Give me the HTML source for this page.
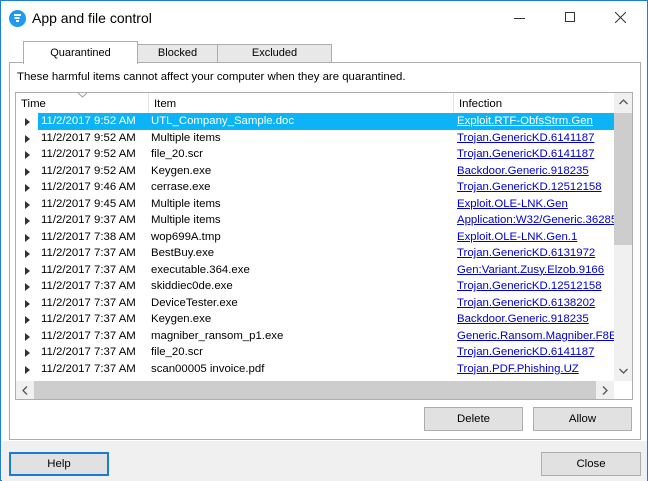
<!DOCTYPE html>
<html><head><style>
*{margin:0;padding:0;box-sizing:border-box}
body{width:648px;height:481px;overflow:hidden;font-family:"Liberation Sans",sans-serif;font-size:11.4px;color:#000;background:#fff;position:relative}
.win{position:absolute;left:0;top:0;width:648px;height:481px;border:1px solid #1c7ed6;background:#fff}
.abs{position:absolute}
.title{left:31px;top:9px;font-size:14px}
.tab{position:absolute;top:43px;height:19px;border:1px solid #adadad;background:#e8e8e8;font-size:11px;text-align:center;line-height:17px}
.panel{left:8px;top:61px;width:632px;height:378px;border:1px solid #adadad;background:#fff}
.list{left:14px;top:91px;width:618px;height:308px;border:1px solid #adadad;background:#fff;overflow:hidden}
.hdr{position:absolute;top:0;height:20px;line-height:22px;font-size:11.4px;padding-left:5px;border-right:1px solid #e5e5e5}
.row{position:absolute;left:0;width:598px;height:16.5px;line-height:16.5px;font-size:11.4px;white-space:nowrap;overflow:hidden}
.row span{position:absolute}
.row .t{left:25px}.row .i{left:135px}.row .f{left:441px;color:#00c;text-decoration:underline}
.row .a{left:9px;top:5px;width:0;height:0;border-left:5px solid #333;border-top:4px solid transparent;border-bottom:4px solid transparent}
.sel .hl{position:absolute;left:22px;top:0;width:576px;height:16.5px;background:#0cb4f7}
.sel span{color:#fff}.sel .f{color:#fff}
.btn{position:absolute;height:24px;border:1px solid #adadad;background:#e1e1e1;text-align:center;line-height:22px;font-size:11.4px}
</style></head><body><div class="win">
<svg class="abs" style="left:8px;top:9px" width="17" height="17" viewBox="0 0 17 17"><circle cx="8.5" cy="8.5" r="8.5" fill="#1e9bf0"/><path d="M5 5h7M5.5 8h5M7 11h3" stroke="#fff" stroke-width="2"/></svg>
<div class="abs title">App and file control</div>
<div class="abs" style="left:513px;top:17px;width:11px;height:1px;background:#333"></div>
<div class="abs" style="left:564px;top:11px;width:10px;height:10px;border:1px solid #333"></div>
<svg class="abs" style="left:614px;top:11px" width="11" height="11"><path d="M0 0L11 11M11 0L0 11" stroke="#333"/></svg>
<div class="abs panel"></div>
<div class="tab" style="left:136px;width:81px">Blocked</div>
<div class="tab" style="left:216px;width:115px">Excluded</div>
<div class="tab" style="left:22px;top:40px;height:23px;width:115px;background:#fff;border-bottom:none;line-height:22px">Quarantined</div>
<div class="abs" style="left:16px;top:70px">These harmful items cannot affect your computer when they are quarantined.</div>
<div class="abs list">
<div class="hdr" style="left:0;width:133px">Time</div>
<svg class="abs" style="left:62px;top:0" width="9" height="5"><path d="M0 0L4.5 4L9 0" stroke="#999" fill="none"/></svg>
<div class="hdr" style="left:133px;width:305px">Item</div>
<div class="hdr" style="left:438px;width:160px;border:none">Infection</div>
<div class="abs" style="left:598px;top:0;width:18px;height:288px;background:#f0f0f0"></div>
<div class="abs" style="left:598px;top:20px;width:18px;height:132px;background:#cdcdcd"></div>
<svg class="abs" style="left:603px;top:6px" width="9" height="6"><path d="M0.5 5L4.5 1L8.5 5" stroke="#555" fill="none" stroke-width="1.3"/></svg>
<svg class="abs" style="left:603px;top:275px" width="9" height="6"><path d="M0.5 1L4.5 5L8.5 1" stroke="#555" fill="none" stroke-width="1.3"/></svg>
<div class="abs" style="left:0;top:288px;width:598px;height:18px;background:#f0f0f0"></div>
<div class="abs" style="left:18px;top:288px;width:562px;height:18px;background:#cdcdcd"></div>
<svg class="abs" style="left:6px;top:293px" width="6" height="9"><path d="M5 0.5L1 4.5L5 8.5" stroke="#555" fill="none" stroke-width="1.3"/></svg>
<svg class="abs" style="left:586px;top:293px" width="6" height="9"><path d="M1 0.5L5 4.5L1 8.5" stroke="#555" fill="none" stroke-width="1.3"/></svg>
<div class="row sel" style="top:20px"><div class="hl"></div><i class="a" style="position:absolute"></i><span class="t">11/2/2017 9:52 AM</span><span class="i">UTL_Company_Sample.doc</span><span class="f">Exploit.RTF-ObfsStrm.Gen</span></div>
<div class="row" style="top:36.5px"><i class="a" style="position:absolute"></i><span class="t">11/2/2017 9:52 AM</span><span class="i">Multiple items</span><span class="f">Trojan.GenericKD.6141187</span></div>
<div class="row" style="top:53px"><i class="a" style="position:absolute"></i><span class="t">11/2/2017 9:52 AM</span><span class="i">file_20.scr</span><span class="f">Trojan.GenericKD.6141187</span></div>
<div class="row" style="top:69.5px"><i class="a" style="position:absolute"></i><span class="t">11/2/2017 9:52 AM</span><span class="i">Keygen.exe</span><span class="f">Backdoor.Generic.918235</span></div>
<div class="row" style="top:86px"><i class="a" style="position:absolute"></i><span class="t">11/2/2017 9:46 AM</span><span class="i">cerrase.exe</span><span class="f">Trojan.GenericKD.12512158</span></div>
<div class="row" style="top:102.5px"><i class="a" style="position:absolute"></i><span class="t">11/2/2017 9:45 AM</span><span class="i">Multiple items</span><span class="f">Exploit.OLE-LNK.Gen</span></div>
<div class="row" style="top:119px"><i class="a" style="position:absolute"></i><span class="t">11/2/2017 9:37 AM</span><span class="i">Multiple items</span><span class="f">Application:W32/Generic.36285</span></div>
<div class="row" style="top:135.5px"><i class="a" style="position:absolute"></i><span class="t">11/2/2017 7:38 AM</span><span class="i">wop699A.tmp</span><span class="f">Exploit.OLE-LNK.Gen.1</span></div>
<div class="row" style="top:152px"><i class="a" style="position:absolute"></i><span class="t">11/2/2017 7:37 AM</span><span class="i">BestBuy.exe</span><span class="f">Trojan.GenericKD.6131972</span></div>
<div class="row" style="top:168.5px"><i class="a" style="position:absolute"></i><span class="t">11/2/2017 7:37 AM</span><span class="i">executable.364.exe</span><span class="f">Gen:Variant.Zusy.Elzob.9166</span></div>
<div class="row" style="top:185px"><i class="a" style="position:absolute"></i><span class="t">11/2/2017 7:37 AM</span><span class="i">skiddiec0de.exe</span><span class="f">Trojan.GenericKD.12512158</span></div>
<div class="row" style="top:201.5px"><i class="a" style="position:absolute"></i><span class="t">11/2/2017 7:37 AM</span><span class="i">DeviceTester.exe</span><span class="f">Trojan.GenericKD.6138202</span></div>
<div class="row" style="top:218px"><i class="a" style="position:absolute"></i><span class="t">11/2/2017 7:37 AM</span><span class="i">Keygen.exe</span><span class="f">Backdoor.Generic.918235</span></div>
<div class="row" style="top:234.5px"><i class="a" style="position:absolute"></i><span class="t">11/2/2017 7:37 AM</span><span class="i">magniber_ransom_p1.exe</span><span class="f">Generic.Ransom.Magniber.F8E5</span></div>
<div class="row" style="top:251px"><i class="a" style="position:absolute"></i><span class="t">11/2/2017 7:37 AM</span><span class="i">file_20.scr</span><span class="f">Trojan.GenericKD.6141187</span></div>
<div class="row" style="top:267.5px"><i class="a" style="position:absolute"></i><span class="t">11/2/2017 7:37 AM</span><span class="i">scan00005 invoice.pdf</span><span class="f">Trojan.PDF.Phishing.UZ</span></div>
</div>
<div class="btn" style="left:423px;top:406px;width:99px">Delete</div>
<div class="btn" style="left:532px;top:406px;width:99px">Allow</div>
<div class="abs" style="left:1px;top:440px;width:645px;height:40px;background:#f0f0f0"></div>
<div class="btn" style="left:8px;top:451px;width:100px;border:2px solid #1a7bd4;line-height:20px">Help</div>
<div class="btn" style="left:540px;top:451px;width:100px">Close</div>
</div></body></html>
